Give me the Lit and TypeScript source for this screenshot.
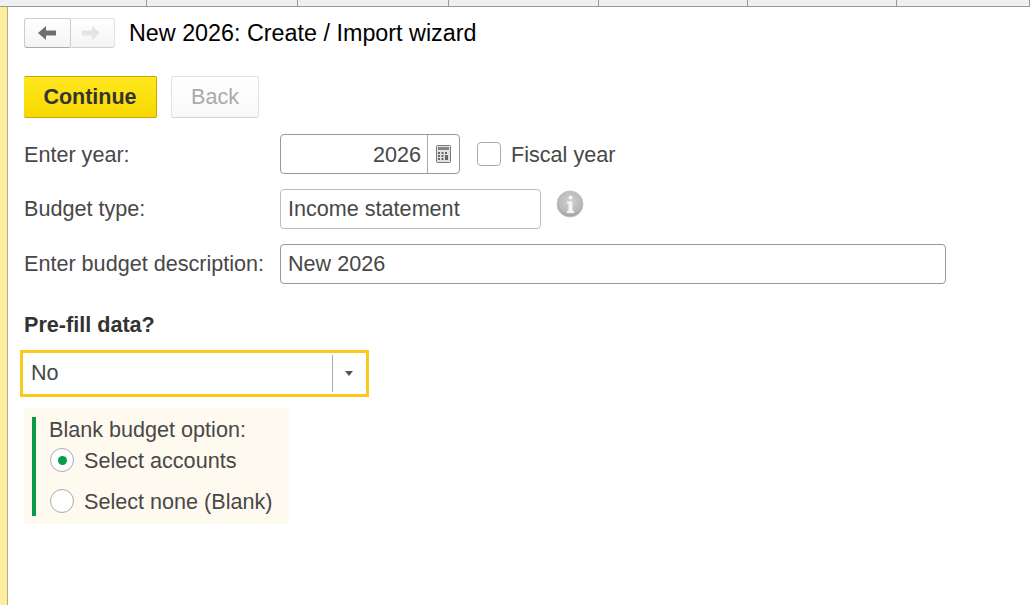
import { LitElement, css, html } from 'lit'
import { customElement } from 'lit/decorators.js'

@customElement('app-root')
export class AppRoot extends LitElement {
  render() {
    return html`
      <div class="tabs">
        ${[139, 151, 151, 151, 149, 149, 133].map(
          (w) => html`<span class="tab" style="width:${w}px"></span>`,
        )}
      </div>
      <div class="body">
        <aside class="side"></aside>
        <main>
          <header>
            <div class="nav">
              <button class="nav-btn back" aria-label="Back">
                <svg width="18" height="14" viewBox="0 0 18 14">
                  <path d="M0 7 8 0v4.500h10v5H8V14z" fill="#6f6f6f" />
                </svg>
              </button>
              <button class="nav-btn fwd" aria-label="Forward">
                <svg width="18" height="14" viewBox="0 0 18 14">
                  <path d="M18 7 10 0v4.500H0v5h10V14z" fill="#e4e4e4" />
                </svg>
              </button>
            </div>
            <h1>New 2026: Create / Import wizard</h1>
          </header>

          <div class="actions">
            <button class="continue">Continue</button>
            <button class="prev">Back</button>
          </div>

          <div class="row year-row">
            <label>Enter year:</label>
            <div class="field year">
              <span class="year-val">2026</span>
              <span class="calc">
                <svg width="15" height="18" viewBox="0 0 15 18">
                  <rect x="0.5" y="0.5" width="14" height="17" rx="1" fill="#e2e2e2" stroke="#7a7a7a" />
                  <rect x="2" y="2" width="11" height="3" fill="#858585" />
                  <path
                    d="M2 7h2v2H2zM5.500 7h2v2h-2zM9 7h2v2H9zM2 10h2v2H2zM5.500 10h2v2h-2zM2 13h2v2H2zM5.500 13h2v2h-2zM9 10h3v5H9z"
                    fill="#666"
                  />
                </svg>
              </span>
            </div>
            <span class="check"></span>
            <span class="check-label">Fiscal year</span>
          </div>

          <div class="row type-row">
            <label>Budget type:</label>
            <div class="field type">Income statement</div>
            <svg class="info" width="28" height="28" viewBox="0 0 28 28">
              <defs>
                <radialGradient id="g" cx="50%" cy="40%" r="65%">
                  <stop offset="0" stop-color="#d2d2d2" />
                  <stop offset="0.7" stop-color="#b8b8b8" />
                  <stop offset="1" stop-color="#8e8e8e" />
                </radialGradient>
              </defs>
              <circle cx="14" cy="14" r="13" fill="url(#g)" stroke="#c4c4c4" />
              <circle cx="14.500" cy="7.500" r="2" fill="#f6f6f6" />
              <path d="M11 11.500h5.500v9.500h1.500v2h-7v-2h1.500v-7.500H11z" fill="#f6f6f6" />
            </svg>
          </div>

          <div class="row desc-row">
            <label>Enter budget description:</label>
            <div class="field desc">New 2026</div>
          </div>

          <h2>Pre-fill data?</h2>

          <div class="select">
            <span class="select-val">No</span>
            <span class="select-caret"><i></i></span>
          </div>

          <section class="option">
            <div class="option-title">Blank budget option:</div>
            <div class="radio-row first">
              <span class="radio on"></span>
              <span class="radio-label">Select accounts</span>
            </div>
            <div class="radio-row second">
              <span class="radio"></span>
              <span class="radio-label">Select none (Blank)</span>
            </div>
          </section>
        </main>
      </div>
    `
  }

  static styles = css`
    *,
    *::before,
    *::after {
      box-sizing: border-box;
    }

    :host {
      display: block;
      height: 605px;
      overflow: hidden;
      background: #fff;
      color: #484848;
      font-family: 'Liberation Sans', Arial, sans-serif;
      font-size: 21.6px;
    }

    .tabs {
      display: flex;
      height: 7px;
      background: #f0f0f0;
      border-bottom: 1px solid #999;
      padding-left: 8px;
    }

    .tab {
      border-right: 1px solid #999;
    }

    .body {
      display: flex;
      height: 598px;
    }

    .side {
      width: 8px;
      background: #fdee9f;
      border-right: 1px solid #b5ad7c;
    }

    main {
      flex: 1;
      padding: 11px 0 0 16px;
    }

    header {
      display: flex;
      align-items: center;
      height: 30px;
      gap: 14px;
    }

    .nav {
      display: flex;
      width: 91px;
      height: 30px;
    }

    .nav-btn {
      display: flex;
      align-items: center;
      justify-content: center;
      padding: 0;
      height: 30px;
      background: linear-gradient(#fff, #f4f4f4);
      border: 1px solid #e2e2e2;
      border-bottom-color: #cfcfcf;
    }

    .back {
      width: 47px;
      padding-right: 1px;
      border-color: #ccc;
      border-bottom-color: #aaa;
      border-radius: 3px 2px 2px 3px;
    }

    .fwd {
      width: 44px;
      padding-right: 3px;
      border-left: 0;
      border-radius: 0 3px 3px 0;
    }

    h1 {
      margin: 0;
      color: #000;
      font-size: 23.33px;
      font-weight: 400;
      white-space: nowrap;
    }

    .actions {
      display: flex;
      gap: 14px;
      margin-top: 28px;
    }

    .continue,
    .prev {
      height: 42px;
      padding: 0;
      font-family: inherit;
      font-size: 21.5px;
      border-radius: 2px;
    }

    .continue {
      width: 133px;
      color: #333;
      font-weight: 700;
      background: linear-gradient(#ffe81f, #f7d800);
      border: 1px solid #c7a600;
      border-left: 0;
    }

    .prev {
      width: 88px;
      color: #aaa;
      background: linear-gradient(#fff, #f8f8f8);
      border: 1px solid #e2e2e2;
      border-bottom-color: #d5d5d5;
    }

    .row {
      display: flex;
      align-items: center;
    }

    .row label {
      width: 256px;
      flex: none;
    }

    .field {
      height: 40px;
      border: 1px solid #bbb;
      border-radius: 4px;
      display: flex;
      align-items: center;
      padding-left: 7px;
    }

    .year-row {
      margin-top: 16px;
    }

    .year-row label,
    .year-val,
    .check-label {
      padding-top: 2px;
    }

    .year {
      width: 180px;
      padding: 0;
      border-color: #999;
    }

    .year-val {
      flex: 1;
      text-align: right;
      padding-right: 6px;
    }

    .calc {
      width: 32px;
      height: 100%;
      display: flex;
      align-items: center;
      justify-content: center;
      border-left: 1px solid #aaa;
    }

    .check {
      width: 24px;
      height: 24px;
      margin-left: 17px;
      border: 1px solid #aaa;
      border-radius: 4px;
    }

    .check-label {
      margin-left: 10px;
    }

    .type-row {
      margin-top: 15px;
    }

    .type {
      width: 261px;
    }

    .info {
      margin: -10px 0 0 15px;
    }

    .desc-row {
      margin-top: 15px;
    }

    .desc {
      width: 666px;
      border-color: #999;
    }

    h2 {
      margin: 29px 0 0;
      font-size: 21.6px;
      line-height: 24px;
      font-weight: 700;
      color: #333;
    }

    .select {
      display: flex;
      align-items: center;
      width: 349px;
      height: 47px;
      margin: 13px 0 0 -4px;
      border: 3px solid #fcc81e;
      padding: 2px 0;
    }

    .select-val {
      flex: 1;
      padding: 0 0 2px 8px;
    }

    .select-caret {
      width: 34px;
      height: 100%;
      display: flex;
      align-items: center;
      justify-content: center;
      padding-right: 2px;
      border-left: 1px solid #aaa;
    }

    .select-caret i {
      border: 4px solid transparent;
      border-top: 5px solid #555;
      border-bottom: 0;
    }

    .option {
      width: 265px;
      height: 116px;
      margin-top: 11px;
      padding: 9px 0 8px 8px;
      background: #fffaf0;
    }

    .option-title {
      height: 25px;
      line-height: 25px;
      padding-left: 13px;
      border-left: 4px solid #0a9a4a;
    }

    .radio-row {
      display: flex;
      align-items: center;
      gap: 10px;
      padding-left: 14px;
      border-left: 4px solid #0a9a4a;
    }

    .radio-row.first {
      height: 36px;
    }

    .radio-row.second {
      height: 38px;
      padding-top: 8px;
    }

    .radio-label {
      padding-top: 2px;
    }

    .radio {
      width: 24px;
      height: 24px;
      border: 1px solid #aaa;
      border-radius: 50%;
      background: #fff;
      display: flex;
      align-items: center;
      justify-content: center;
    }

    .radio.on::after {
      content: '';
      width: 9px;
      height: 9px;
      border-radius: 50%;
      background: #0a9a4a;
    }
  `
}
